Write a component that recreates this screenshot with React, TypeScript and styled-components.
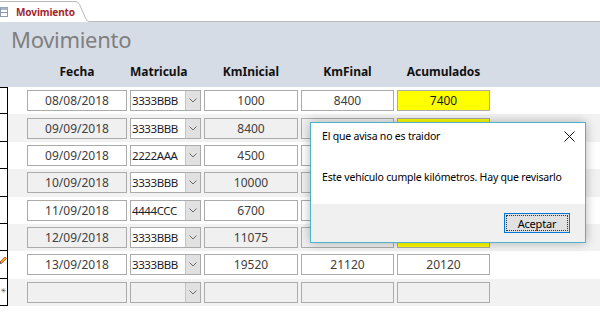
import React from "react";
import styled, { createGlobalStyle } from "styled-components";

const GlobalStyle = createGlobalStyle`
  html, body { margin: 0; padding: 0; background: #ffffff; }
  body { width: 600px; height: 318px; overflow: hidden; font-family: "Noto Sans", "Open Sans", sans-serif; }
`;

const Page = styled.div`
  position: relative;
  width: 600px;
  height: 318px;
  overflow: hidden;
  background: #ffffff;
`;

const TabStrip = styled.div`
  display: flex;
  height: 22px;
  background: #ffffff;
`;

const Tab = styled.div`
  display: flex;
  align-items: center;
  gap: 8px;
  height: 21px;
  border-top: 1px solid #b9b9b9;
  box-sizing: border-box;
  margin-top: 1px;
  background: #ffffff;
`;

const TabText = styled.span`
  font-family: "Noto Sans", sans-serif;
  font-size: 10px;
  font-weight: 700;
  color: #a4262c;
  letter-spacing: -0.1px;
`;

const TabCorner = styled.svg`
  display: block;
  flex: none;
`;

const TabRest = styled.div`
  flex: 1;
  border-bottom: 1px solid #b9b9b9;
`;

const Header = styled.div`
  height: 65px;
  background: #d6dce5;
  display: flex;
  flex-direction: column;
  box-sizing: border-box;
  padding-top: 2px;
`;

const Title = styled.div`
  font-family: "Noto Sans", sans-serif;
  font-size: 22px;
  line-height: 30px;
  color: #7f7f7f;
  padding-left: 11px;
  letter-spacing: -0.3px;
`;

const Grid = styled.div`
  display: grid;
  grid-template-columns: 100px 71px 94px 93px 93px;
  column-gap: 3px;
  align-items: center;
`;

const HeadGrid = styled(Grid)`
  margin-top: 10px;
  padding-left: 27px;
`;

const HeadCell = styled.div<{ $padRight?: number }>`
  font-family: "Noto Sans", sans-serif;
  font-weight: 700;
  font-size: 12px;
  line-height: 16px;
  color: #111111;
  text-align: center;
  padding-right: ${(p) => p.$padRight ?? 0}px;
`;

const Rows = styled.div`
  display: flex;
  flex-direction: column;
`;

const Row = styled.div<{ $alt: boolean }>`
  display: flex;
  height: 27.375px;
  background: ${(p) => (p.$alt ? "#f2f2f2" : "#ffffff")};
`;

const Selector = styled.div<{ $first?: boolean }>`
  width: 8px;
  flex: none;
  box-sizing: border-box;
  background: #ffffff;
  border-right: 1px solid #000000;
  border-bottom: 1px solid #000000;
  border-top: ${(p) => (p.$first ? "1px solid #000000" : "none")};
  overflow: hidden;
  display: flex;
  align-items: center;
  justify-content: center;
`;

const NewMark = styled.span`
  font-family: "DejaVu Sans", sans-serif;
  font-size: 7px;
  line-height: 7px;
  color: #555555;
`;

const Cells = styled(Grid)`
  padding-left: 19px;
  flex: 1;
`;

type Tone = "white" | "gray" | "yellow";

const toneBg: Record<Tone, string> = {
  white: "#ffffff",
  gray: "#f0f0f0",
  yellow: "#ffff00",
};

const TextBox = styled.div<{ $tone: Tone }>`
  height: 21px;
  box-sizing: border-box;
  border: 1px solid #ababab;
  background: ${(p) => toneBg[p.$tone]};
  font-family: "Noto Sans", sans-serif;
  font-size: 12px;
  line-height: 19px;
  color: ${(p) => (p.$tone === "yellow" ? "#1a1a1a" : "#404040")};
  text-align: center;
`;

const Combo = styled.div<{ $tone: Tone }>`
  height: 21px;
  box-sizing: border-box;
  border: 1px solid #ababab;
  background: ${(p) => toneBg[p.$tone]};
  display: flex;
`;

const ComboText = styled.div`
  flex: 1;
  font-family: "Noto Sans", sans-serif;
  font-size: 11.5px;
  line-height: 19px;
  color: #1c1c2c;
  padding-left: 1px;
  letter-spacing: -0.4px;
  white-space: nowrap;
  overflow: hidden;
`;

const DropButton = styled.div`
  width: 14px;
  flex: none;
  background: #e1e1e1;
  border-left: 1px solid #c4c4c4;
  display: flex;
  align-items: center;
  justify-content: center;
`;

const Dialog = styled.div`
  position: absolute;
  left: 310px;
  top: 122px;
  width: 276px;
  height: 121px;
  box-sizing: border-box;
  border: 1px solid #4db3c9;
  background: #ffffff;
  box-shadow: 0 0 10px rgba(0, 0, 0, 0.28);
  display: flex;
  flex-direction: column;
`;

const DialogTitleBar = styled.div`
  height: 26px;
  display: flex;
  align-items: center;
  justify-content: space-between;
  padding: 0 10px 0 11px;
`;

const DialogText = styled.div`
  font-family: "Noto Sans", "Open Sans", sans-serif;
  font-size: 10.5px;
  color: #000000;
  letter-spacing: -0.2px;
  white-space: nowrap;
`;

const DialogBody = styled.div`
  height: 55px;
  display: flex;
  align-items: center;
  padding-left: 11px;
`;

const DialogFooter = styled.div`
  flex: 1;
  background: #f0f0f0;
  display: flex;
  justify-content: flex-end;
  align-items: flex-start;
  padding: 9px 15px 0 0;
`;

const Button = styled.div`
  width: 66px;
  height: 20px;
  box-sizing: border-box;
  border: 1px solid #0078d7;
  background: #e1e1e1;
  padding: 1px;
`;

const ButtonFocus = styled.div`
  height: 100%;
  box-sizing: border-box;
  border: 1px dotted #333333;
  display: flex;
  align-items: center;
  justify-content: center;
  font-family: "Noto Sans", sans-serif;
  font-size: 11px;
  color: #000000;
  letter-spacing: -0.2px;
`;

type Rec = {
  fecha: string;
  mat: string;
  ki: string;
  kf: string;
  acc: string;
  accYellow: boolean;
};

const records: Rec[] = [
  { fecha: "08/08/2018", mat: "3333BBB", ki: "1000", kf: "8400", acc: "7400", accYellow: true },
  { fecha: "09/09/2018", mat: "3333BBB", ki: "8400", kf: "", acc: "", accYellow: true },
  { fecha: "09/09/2018", mat: "2222AAA", ki: "4500", kf: "", acc: "", accYellow: true },
  { fecha: "10/09/2018", mat: "3333BBB", ki: "10000", kf: "", acc: "", accYellow: true },
  { fecha: "11/09/2018", mat: "4444CCC", ki: "6700", kf: "", acc: "", accYellow: true },
  { fecha: "12/09/2018", mat: "3333BBB", ki: "11075", kf: "", acc: "", accYellow: true },
  { fecha: "13/09/2018", mat: "3333BBB", ki: "19520", kf: "21120", acc: "20120", accYellow: false },
];

const Chevron = () => (
  <svg width="8" height="5" viewBox="0 0 8 5">
    <path d="M0.5 0.5 L4 4 L7.5 0.5" fill="none" stroke="#6a6a6a" strokeWidth="1" />
  </svg>
);

const Pencil = () => (
  <svg width="8" height="8" viewBox="0 0 8 8" style={{ marginLeft: -2, marginTop: -8 }}>
    <path d="M1 6 L6 1 L7.5 2.5 L2.5 7.5 Z" fill="#f2b600" stroke="#c0392b" strokeWidth="0.8" />
    <path d="M1 6 L0.3 7.7 L2.5 7.5 Z" fill="#333" />
  </svg>
);

const TableIcon = () => (
  <svg width="12" height="10" viewBox="0 0 12 10" style={{ marginLeft: -4 }}>
    <rect x="0.5" y="0.5" width="11" height="9" fill="#ffffff" stroke="#8a9ab0" />
    <rect x="0.5" y="0.5" width="11" height="2.5" fill="#a9b8cc" />
    <line x1="0.5" y1="5.5" x2="11.5" y2="5.5" stroke="#8a9ab0" />
    <line x1="4.5" y1="0.5" x2="4.5" y2="9.5" stroke="#8a9ab0" />
  </svg>
);

export default function App() {
  return (
    <Page>
      <GlobalStyle />
      <TabStrip>
        <Tab>
          <TableIcon />
          <TabText>Movimiento</TabText>
        </Tab>
        <TabCorner width="14" height="22" viewBox="0 0 14 22">
          <path d="M0 1.5 L1 1.5 Q3 1.5 4.5 4.5 L11 19 Q12 21.5 14 21.5" fill="#ffffff" stroke="#b9b9b9" strokeWidth="1" />
        </TabCorner>
        <TabRest />
      </TabStrip>
      <Header>
        <Title>Movimiento</Title>
        <HeadGrid>
          <HeadCell>Fecha</HeadCell>
          <HeadCell $padRight={16}>Matricula</HeadCell>
          <HeadCell>KmInicial</HeadCell>
          <HeadCell>KmFinal</HeadCell>
          <HeadCell>Acumulados</HeadCell>
        </HeadGrid>
      </Header>
      <Rows>
        {records.map((r, i) => {
          const alt = i % 2 === 1;
          const tone: Tone = alt ? "gray" : "white";
          return (
            <Row key={i} $alt={alt}>
              <Selector $first={i === 0}>{i === 6 ? <Pencil /> : null}</Selector>
              <Cells>
                <TextBox $tone={tone}>{r.fecha}</TextBox>
                <Combo $tone="white">
                  <ComboText>{r.mat}</ComboText>
                  <DropButton>
                    <Chevron />
                  </DropButton>
                </Combo>
                <TextBox $tone={tone}>{r.ki}</TextBox>
                <TextBox $tone={tone}>{r.kf}</TextBox>
                <TextBox $tone={r.accYellow ? "yellow" : tone}>{r.acc}</TextBox>
              </Cells>
            </Row>
          );
        })}
        <Row $alt={true}>
          <Selector>
            <NewMark>✳</NewMark>
          </Selector>
          <Cells>
            <TextBox $tone="gray" />
            <Combo $tone="gray">
              <ComboText />
              <DropButton>
                <Chevron />
              </DropButton>
            </Combo>
            <TextBox $tone="gray" />
            <TextBox $tone="gray" />
            <TextBox $tone="gray" />
          </Cells>
        </Row>
      </Rows>
      <Dialog>
        <DialogTitleBar>
          <DialogText>El que avisa no es traidor</DialogText>
          <svg width="11" height="11" viewBox="0 0 11 11">
            <path d="M0.5 0.5 L10.5 10.5 M10.5 0.5 L0.5 10.5" stroke="#111" strokeWidth="1" />
          </svg>
        </DialogTitleBar>
        <DialogBody>
          <DialogText>Este vehículo cumple kilómetros. Hay que revisarlo</DialogText>
        </DialogBody>
        <DialogFooter>
          <Button>
            <ButtonFocus>Aceptar</ButtonFocus>
          </Button>
        </DialogFooter>
      </Dialog>
    </Page>
  );
}
